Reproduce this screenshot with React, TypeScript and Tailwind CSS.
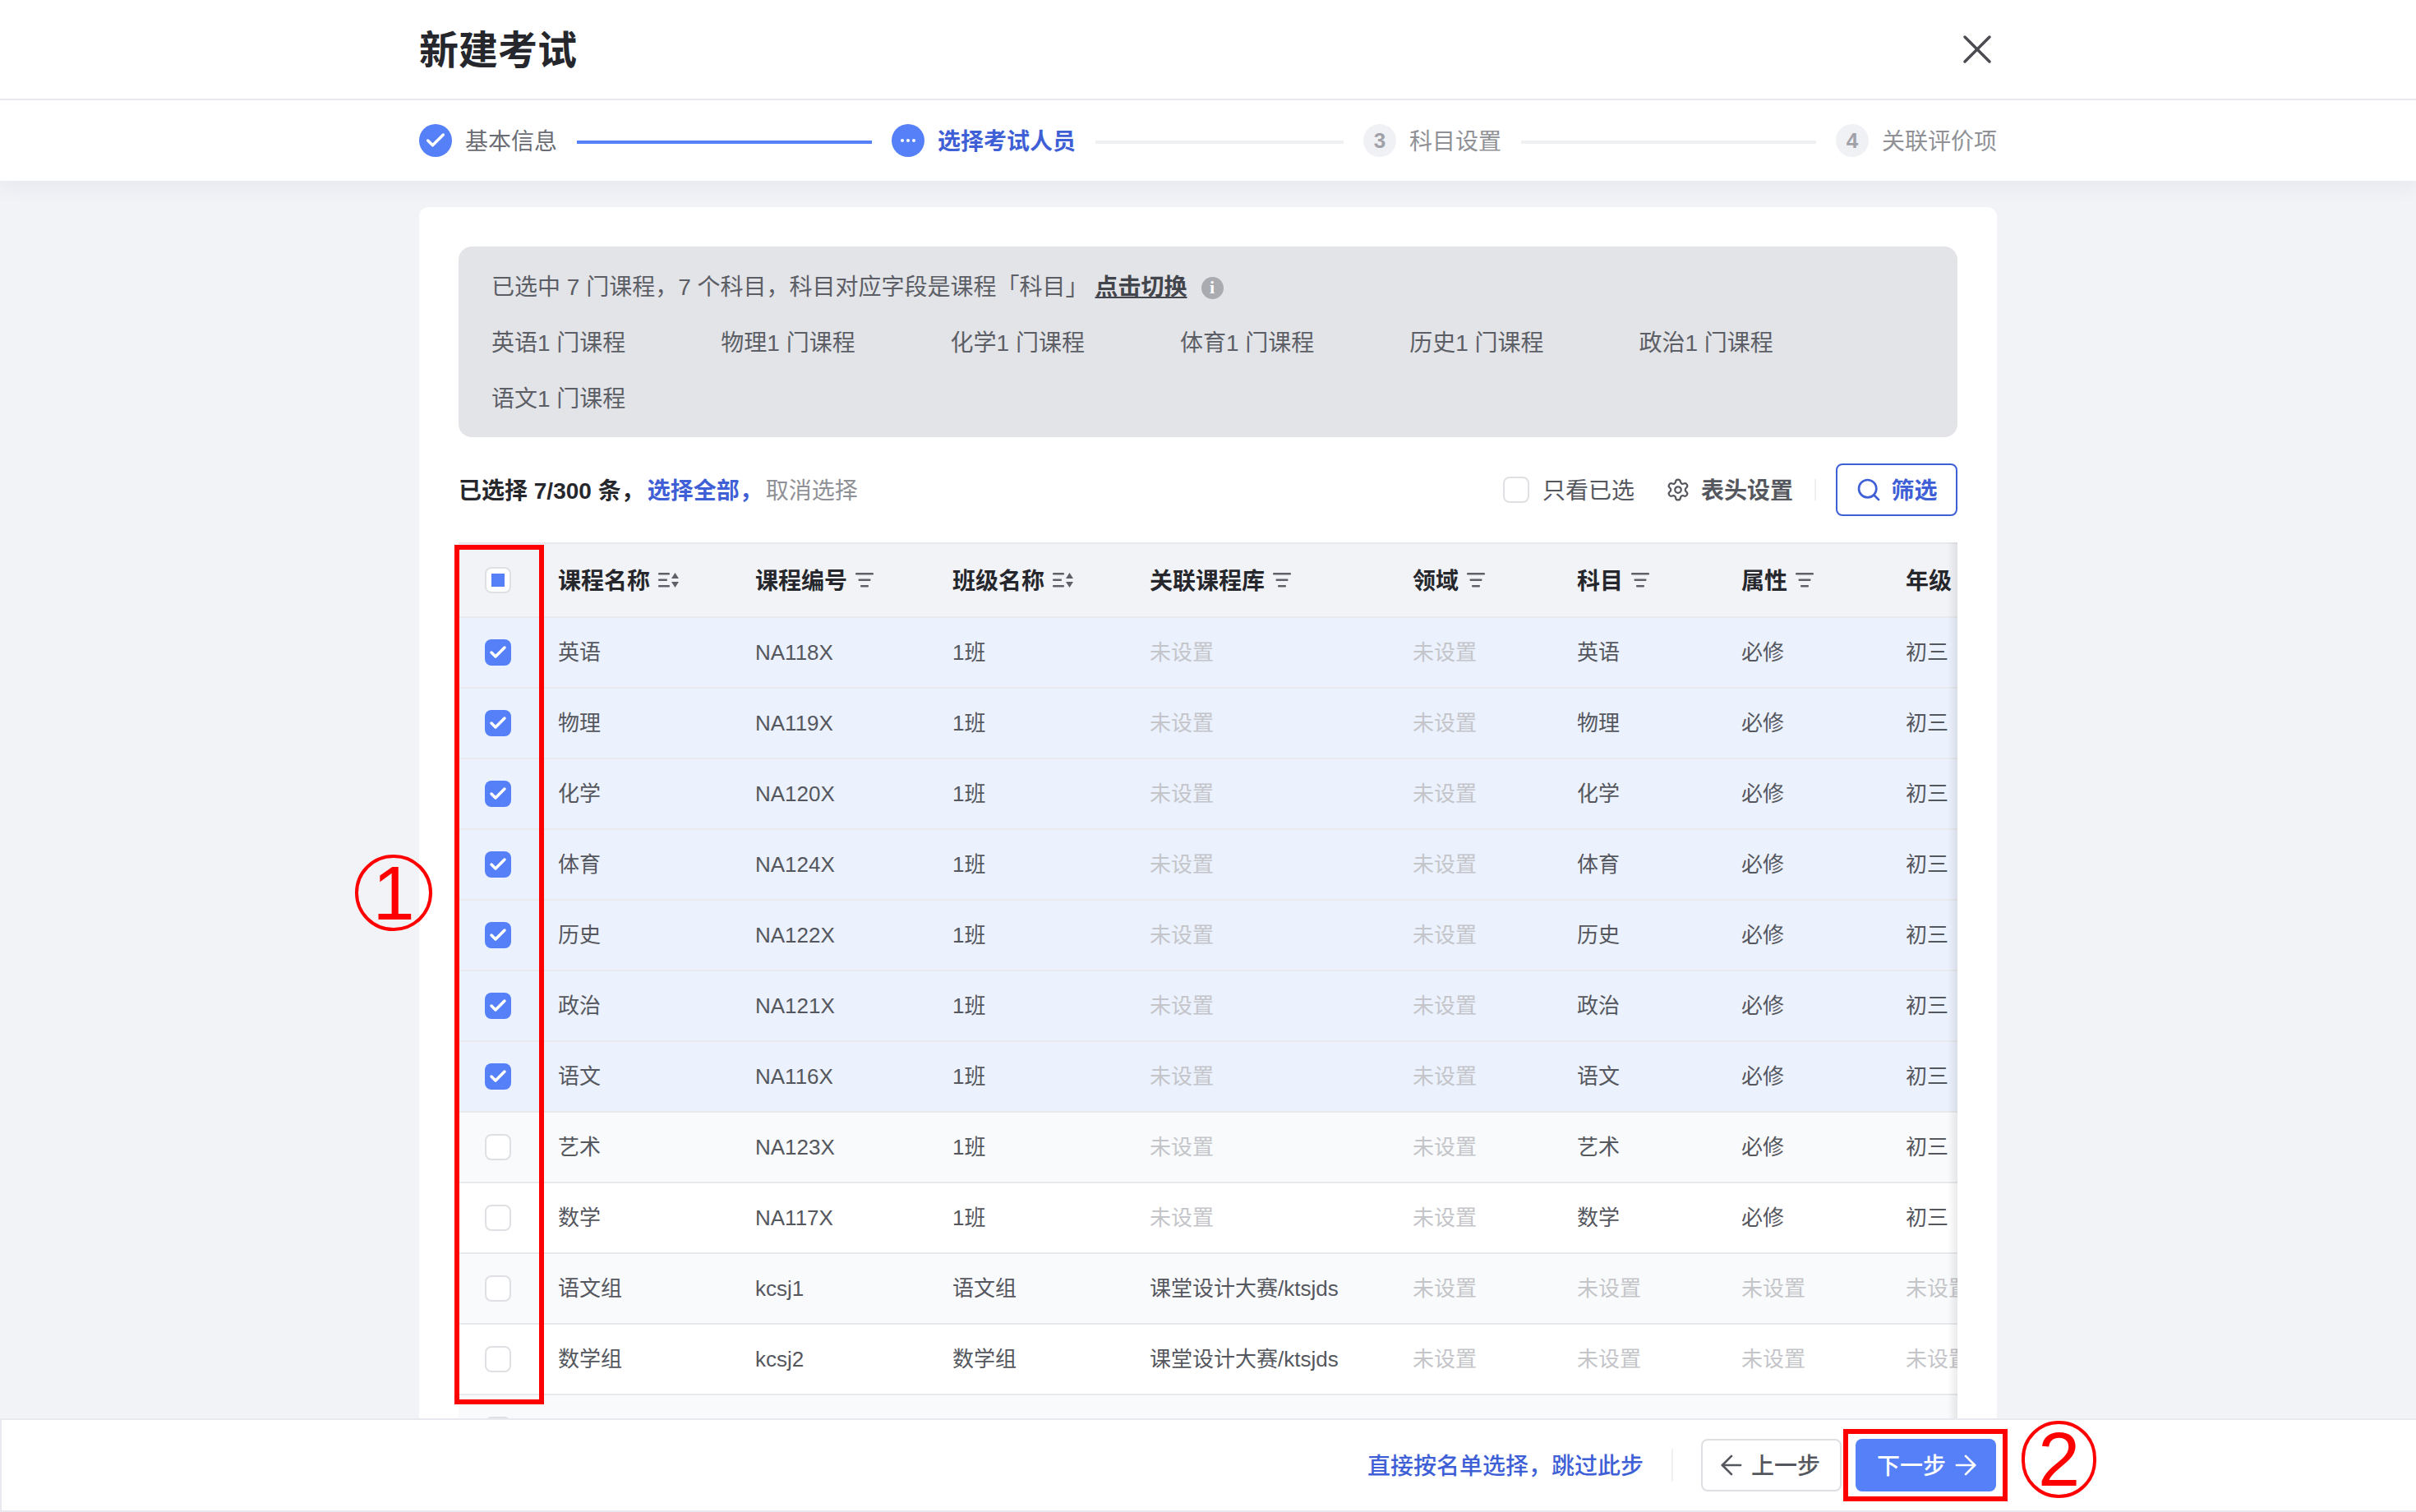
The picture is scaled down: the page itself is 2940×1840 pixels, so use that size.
import { ArrowLeft, ArrowRight, Check, Search, Settings, X } from 'lucide-react'

const FONT = 'font-["Liberation_Sans","Noto_Sans_CJK_SC",sans-serif]'
const CELLS = 'grid grid-cols-[121px_240px_240px_240px_320px_200px_200px_200px_200px]'

const summary = ['英语', '物理', '化学', '体育', '历史', '政治', '语文']

const columns = [
  { label: '课程名称', sort: true },
  { label: '课程编号' },
  { label: '班级名称', sort: true },
  { label: '关联课程库' },
  { label: '领域' },
  { label: '科目' },
  { label: '属性' },
  { label: '年级', plain: true },
]

const NONE = '未设置'

const rows = [
  { name: '英语', code: 'NA118X', cls: '1班', lib: NONE, area: NONE, subject: '英语', attr: '必修', grade: '初三', checked: true },
  { name: '物理', code: 'NA119X', cls: '1班', lib: NONE, area: NONE, subject: '物理', attr: '必修', grade: '初三', checked: true },
  { name: '化学', code: 'NA120X', cls: '1班', lib: NONE, area: NONE, subject: '化学', attr: '必修', grade: '初三', checked: true },
  { name: '体育', code: 'NA124X', cls: '1班', lib: NONE, area: NONE, subject: '体育', attr: '必修', grade: '初三', checked: true },
  { name: '历史', code: 'NA122X', cls: '1班', lib: NONE, area: NONE, subject: '历史', attr: '必修', grade: '初三', checked: true },
  { name: '政治', code: 'NA121X', cls: '1班', lib: NONE, area: NONE, subject: '政治', attr: '必修', grade: '初三', checked: true },
  { name: '语文', code: 'NA116X', cls: '1班', lib: NONE, area: NONE, subject: '语文', attr: '必修', grade: '初三', checked: true },
  { name: '艺术', code: 'NA123X', cls: '1班', lib: NONE, area: NONE, subject: '艺术', attr: '必修', grade: '初三' },
  { name: '数学', code: 'NA117X', cls: '1班', lib: NONE, area: NONE, subject: '数学', attr: '必修', grade: '初三' },
  { name: '语文组', code: 'kcsj1', cls: '语文组', lib: '课堂设计大赛/ktsjds', area: NONE, subject: NONE, attr: NONE, grade: NONE },
  { name: '数学组', code: 'kcsj2', cls: '数学组', lib: '课堂设计大赛/ktsjds', area: NONE, subject: NONE, attr: NONE, grade: NONE },
  { name: '', code: '', cls: '', lib: '', area: '', subject: '', attr: '', grade: '' },
]

function FilterIcon() {
  return (
    <svg width="22" height="18" viewBox="0 0 22 18" className="shrink-0 text-[#5f6169]" fill="currentColor">
      <rect x="0" y="0" width="22" height="2.5" rx="1" />
      <rect x="3.5" y="7.5" width="15" height="2.5" rx="1" />
      <rect x="6" y="15" width="10" height="2.5" rx="1" />
    </svg>
  )
}

function SortIcon() {
  return (
    <svg width="25" height="18" viewBox="0 0 25 18" className="shrink-0 text-[#5f6169]" fill="currentColor">
      <rect x="0" y="0" width="14" height="2.5" rx="1" />
      <rect x="0" y="7.5" width="11" height="2.5" rx="1" />
      <rect x="0" y="15" width="14" height="2.5" rx="1" />
      <path d="M20.5 0 L25 7 H16 Z M16 11 H25 L20.5 18 Z" />
    </svg>
  )
}

function Box({ state }: { state?: 'on' | 'part' }) {
  if (state === 'on') {
    return (
      <span className="flex h-8 w-8 items-center justify-center rounded-lg bg-[#5580f7]">
        <Check size={24} strokeWidth={3.5} className="text-white" />
      </span>
    )
  }
  return (
    <span className="flex h-8 w-8 items-center justify-center rounded-lg border-2 border-[#dfe0e3] bg-white">
      {state === 'part' && <span className="h-4 w-4 bg-[#5580f7]" />}
    </span>
  )
}

function Step({ mark, label, tone }: { mark: React.ReactNode; label: string; tone: string }) {
  return (
    <div className="flex shrink-0 items-center gap-4">
      {mark}
      <span className={`pt-1 ${tone}`}>{label}</span>
    </div>
  )
}

function Num({ n }: { n: number }) {
  return (
    <span className="flex h-10 w-10 items-center justify-center rounded-full bg-[#f0f1f5] text-[26px] font-bold text-[#a0a2a8]">
      {n}
    </span>
  )
}

function Cell({ text }: { text: string }) {
  return <div className={`whitespace-nowrap ${text === NONE ? 'text-[#c4c5c9]' : 'text-[#55575e]'}`}>{text}</div>
}

export default function App() {
  return (
    <div className={`relative flex h-[1840px] w-[2940px] flex-col overflow-hidden bg-[#f2f3f7] ${FONT}`}>
      <header className="relative z-10 bg-white shadow-[0_8px_24px_rgba(30,40,70,0.05)]">
        <div className="border-b-2 border-[#e8e9ec]">
          <div className="mx-auto flex h-[120px] w-[1920px] items-center justify-between">
            <h1 className="pt-1 text-[48px] font-bold text-[#25272c]">新建考试</h1>
            <X size={60} strokeWidth={1.4} className="mr-[-6px] text-[#4a4c52]" />
          </div>
        </div>
        <div className="mx-auto flex h-[98px] w-[1920px] items-center text-[28px]">
          <Step
            label="基本信息"
            tone="text-[#6a6c73]"
            mark={
              <span className="flex h-10 w-10 items-center justify-center rounded-full bg-[#5580f7]">
                <Check size={28} strokeWidth={3} className="text-white" />
              </span>
            }
          />
          <div className="mx-6 mt-1 h-1 w-[359px] bg-[#5580f7]" />
          <Step
            label="选择考试人员"
            tone="font-semibold text-[#3f5fd6]"
            mark={
              <span className="flex h-10 w-10 items-center justify-center gap-[3px] rounded-full bg-[#5580f7]">
                <i className="h-1 w-1 rounded-full bg-white" />
                <i className="h-1 w-1 rounded-full bg-white" />
                <i className="h-1 w-1 rounded-full bg-white" />
              </span>
            }
          />
          <div className="mx-6 mt-1 h-1 w-[302px] bg-[#eff0f2]" />
          <Step label="科目设置" tone="text-[#8f9196]" mark={<Num n={3} />} />
          <div className="mx-6 mt-1 h-1 w-[359px] bg-[#eff0f2]" />
          <Step label="关联评价项" tone="text-[#8f9196]" mark={<Num n={4} />} />
        </div>
      </header>

      <main className="mx-auto mt-8 flex min-h-0 w-[1920px] flex-1 flex-col overflow-hidden rounded-t-xl bg-white px-12 pt-12">
        <section className="h-[232px] shrink-0 rounded-2xl bg-[#e3e4e8] px-10 pt-[30px] text-[28px] leading-10 text-[#5c5e66]">
          <div className="flex items-center">
            <span>已选中 7 门课程，7 个科目，科目对应字段是课程「科目」</span>
            <span className="ml-2 font-semibold text-[#43454c] underline">点击切换</span>
            <span className='ml-[17px] flex h-[27px] w-[27px] items-center justify-center rounded-full bg-[#a9abb1] font-["Liberation_Serif"] text-[22px] font-bold text-white'>i</span>
          </div>
          <div className="mt-7 grid grid-cols-[repeat(6,279.3px)] gap-y-7">
            {summary.map(s => (
              <span key={s}>{s}1 门课程</span>
            ))}
          </div>
        </section>

        <div className="flex h-[128px] shrink-0 items-center text-[28px]">
          <span className="pt-1 font-semibold text-[#25272c]">已选择 7/300 条，</span>
          <span className="ml-1 pt-1 font-semibold text-[#3f5fd6]">选择全部，</span>
          <span className="ml-1 pt-1 text-[#8f9196]">取消选择</span>
          <div className="ml-auto flex items-center">
            <Box />
            <span className="ml-4 pt-1 text-[#55575e]">只看已选</span>
            <Settings size={30} strokeWidth={1.8} className="ml-[38px] text-[#55575e]" />
            <span className="ml-[13px] pt-1 font-semibold text-[#55575e]">表头设置</span>
            <div className="ml-[26px] mr-[24px] h-[26px] w-0.5 bg-[#eff0f2]" />
            <button className="flex h-16 w-[148px] items-center justify-center gap-[11px] rounded-lg border-2 border-[#3f5fd6] font-semibold text-[#3f5fd6]">
              <Search size={32} strokeWidth={2} />
              <span className="pt-1">筛选</span>
            </button>
          </div>
        </div>

        <div className="relative min-h-0 flex-1 overflow-hidden">
          <div className={`${CELLS} h-[92px] items-center border-y-2 border-[#e8e9ec] bg-[#f2f3f7] text-[28px] font-semibold text-[#25272c]`}>
            <div className="pl-8"><Box state="part" /></div>
            {columns.map(c => (
              <div key={c.label} className="flex items-center gap-[10px] whitespace-nowrap">
                <span className="pt-1">{c.label}</span>
                {!c.plain && (c.sort ? <SortIcon /> : <FilterIcon />)}
              </div>
            ))}
          </div>
          {rows.map((r, i) => (
            <div
              key={i}
              className={`${CELLS} h-[86px] items-center border-b-2 border-[#e8e9ec] text-[26px] ${
                r.checked ? 'bg-[#ebf1fd]' : i % 2 === 1 ? 'bg-[#f9fafc]' : 'bg-white'
              }`}
            >
              <div className="pl-8"><Box state={r.checked ? 'on' : undefined} /></div>
              <Cell text={r.name} />
              <Cell text={r.code} />
              <Cell text={r.cls} />
              <Cell text={r.lib} />
              <Cell text={r.area} />
              <Cell text={r.subject} />
              <Cell text={r.attr} />
              <Cell text={r.grade} />
            </div>
          ))}
          <div className="pointer-events-none absolute inset-y-0 right-0 w-3 bg-gradient-to-l from-[#00000014] to-transparent" />
        </div>
      </main>

      <footer className="relative z-10 flex h-[114px] items-center justify-end border-y-2 border-l-2 border-[#e8e9ee] bg-white pr-[511px] text-[28px]">
        <span className="pt-1 font-medium text-[#3f5fd6]">直接按名单选择，跳过此步</span>
        <div className="mx-[34px] h-10 w-0.5 bg-[#eff0f2]" />
        <button className="flex h-16 w-[171px] items-center justify-center gap-[13px] rounded-lg border-2 border-[#dedfe2] font-medium text-[#55575e]">
          <ArrowLeft size={38} strokeWidth={1.7} className="-mx-2" />
          <span className="pt-1">上一步</span>
        </button>
        <button className="ml-[17px] flex h-16 w-[171px] items-center justify-center gap-[13px] rounded-lg bg-[#5580f7] font-medium text-white">
          <span className="pt-1">下一步</span>
          <ArrowRight size={38} strokeWidth={1.7} className="-mx-2" />
        </button>
      </footer>

      {/* 标注 */}
      <div className="absolute left-[553px] top-[663px] z-20 h-[1046px] w-[109px] border-[6px] border-[#ff0000]" />
      <div className="absolute left-[2243px] top-[1739px] z-20 h-[88px] w-[200px] border-[6px] border-[#ff0000]" />
      <span className="absolute left-[432px] top-[1040px] z-20 flex h-[93px] w-[94px] items-center justify-center rounded-full border-4 border-[#ff0000] text-[92px] leading-none text-[#ff0000]">1</span>
      <span className="absolute left-[2460px] top-[1729px] z-20 flex h-[94px] w-[91px] items-center justify-center rounded-full border-4 border-[#ff0000] text-[92px] leading-none text-[#ff0000]">2</span>
    </div>
  )
}
